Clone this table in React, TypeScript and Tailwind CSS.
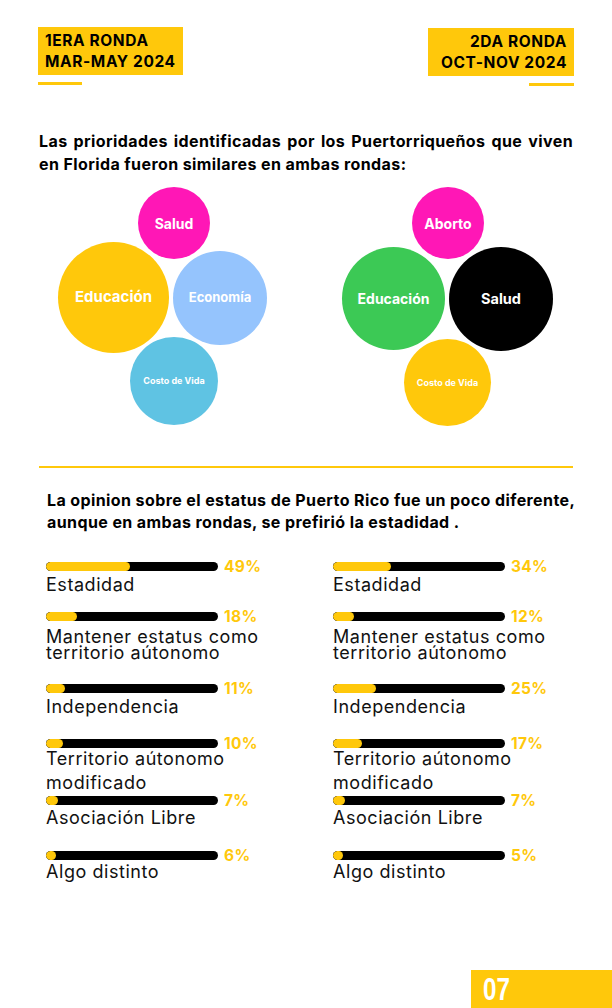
import React from "react";

type Item = {
  pct: number;
  label: string[];
  box: string;
  lab: string;
};

const mk = (pcts: number[]): Item[] => [
  { pct: pcts[0], label: ["Estadidad"], box: "h-[50px]", lab: "mt-[1px] leading-[20px]" },
  { pct: pcts[1], label: ["Mantener estatus como", "territorio aútonomo"], box: "h-[72px]", lab: "mt-[5px] leading-[16px]" },
  { pct: pcts[2], label: ["Independencia"], box: "h-[55px]", lab: "mt-[1px] leading-[20px]" },
  { pct: pcts[3], label: ["Territorio aútonomo", "modificado"], box: "h-[57px]", lab: "mt-[-4px] leading-[24px]" },
  { pct: pcts[4], label: ["Asociación Libre"], box: "h-[55px]", lab: "mt-[0px] leading-[20px]" },
  { pct: pcts[5], label: ["Algo distinto"], box: "h-[55px]", lab: "mt-[-1px] leading-[20px]" },
];

const leftItems = mk([49, 18, 11, 10, 7, 6]);
const rightItems = mk([34, 12, 25, 17, 7, 5]);

function Column({ items }: { items: Item[] }) {
  return (
    <div className="flex flex-col">
      {items.map((it, i) => (
        <div key={i} className={`flex flex-col ${it.box}`}>
          <div className="flex items-start gap-[6px]">
            <div className="mt-[3px] h-[9px] w-[172px] overflow-hidden rounded-full bg-black">
              <div
                className="h-full rounded-full bg-[#FFC80B]"
                style={{ width: Math.max((it.pct / 100) * 172, 10) }}
              />
            </div>
            <span className="text-[15.5px] font-bold leading-[15px] tracking-[0.3px] text-[#FFC80B]">
              {it.pct}%
            </span>
          </div>
          <div className={`text-[18px] tracking-[0.55px] text-[#111] ${it.lab}`}>
            {it.label.map((l, j) => (
              <div key={j}>{l}</div>
            ))}
          </div>
        </div>
      ))}
    </div>
  );
}

function Circle({
  cls,
  text,
  textCls,
}: {
  cls: string;
  text: string;
  textCls: string;
}) {
  return (
    <div className={`absolute flex items-center justify-center rounded-full ${cls}`}>
      <span className={`font-bold text-white ${textCls}`}>{text}</span>
    </div>
  );
}

export default function App() {
  return (
    <div
      className="flex h-[1008px] w-[612px] flex-col overflow-hidden bg-white text-black"
      style={{ fontFamily: "Inter, 'Open Sans', sans-serif" }}
    >
      {/* Header */}
      <div className="flex justify-between px-[38px] pt-[27px]">
        <div className="flex flex-col">
          <div className="flex h-[48px] w-[145px] flex-col justify-center bg-[#FFC80B] px-[7px] text-[15.5px] font-bold leading-[21px] tracking-[0.6px]">
            <div>1ERA RONDA</div>
            <div>MAR-MAY 2024</div>
          </div>
          <div className="mt-[7px] h-[3px] w-[44px] bg-[#FFC80B]" />
        </div>
        <div className="mt-[1px] flex flex-col items-end">
          <div className="flex h-[48px] w-[146px] flex-col items-end justify-center bg-[#FFC80B] px-[7px] text-right text-[15.5px] font-bold leading-[21px] tracking-[0.6px]">
            <div>2DA RONDA</div>
            <div>OCT-NOV 2024</div>
          </div>
          <div className="mt-[7px] h-[3px] w-[45px] bg-[#FFC80B]" />
        </div>
      </div>

      {/* Paragraph 1 */}
      <div className="mt-[44px] px-[39px] text-[16px] font-bold leading-[23px] tracking-[0.4px]">
        <div className="whitespace-nowrap text-justify [text-align-last:justify]">
          Las prioridades identificadas por los Puertorriqueños que viven
        </div>
        <div>en Florida fueron similares en ambas rondas:</div>
      </div>

      {/* Bubbles */}
      <div className="relative mt-[4px] h-[250px] w-full">
        <Circle cls="left-[138px] top-[7px] h-[72px] w-[72px] bg-[#FF17B6]" text="Salud" textCls="text-[14px]" />
        <Circle cls="left-[58px] top-[62px] h-[111px] w-[111px] bg-[#FFC80B]" text="Educación" textCls="text-[15px]" />
        <Circle cls="left-[173px] top-[71px] h-[94px] w-[94px] bg-[#95C4FD]" text="Economía" textCls="text-[13px]" />
        <Circle cls="left-[130px] top-[157px] h-[88px] w-[88px] bg-[#5FC3E3]" text="Costo de Vida" textCls="text-[9px]" />

        <Circle cls="left-[412px] top-[7px] h-[72px] w-[72px] bg-[#FF17B6]" text="Aborto" textCls="text-[14px]" />
        <Circle cls="left-[342px] top-[67px] h-[103px] w-[103px] bg-[#3CC955]" text="Educación" textCls="text-[14px]" />
        <Circle cls="left-[449px] top-[67px] h-[104px] w-[104px] bg-black" text="Salud" textCls="text-[14.5px]" />
        <Circle cls="left-[404px] top-[159px] h-[87px] w-[87px] bg-[#FFC80B]" text="Costo de Vida" textCls="text-[9px]" />
      </div>

      {/* Divider */}
      <div className="mx-[39px] mt-[36px] h-[2px] bg-[#FFC80B]" />

      {/* Paragraph 2 */}
      <div className="mt-[21px] px-[47px] text-[16px] font-bold leading-[22px] tracking-[0.4px]">
        <div className="whitespace-nowrap">La opinion sobre el estatus de Puerto Rico fue un poco diferente,</div>
        <div className="whitespace-nowrap">aunque en ambas rondas, se prefirió la estadidad .</div>
      </div>

      {/* Bars */}
      <div className="mt-[26px] flex pl-[46px]">
        <div className="w-[287px]">
          <Column items={leftItems} />
        </div>
        <Column items={rightItems} />
      </div>

      {/* Footer */}
      <div className="mt-auto flex justify-end">
        <div className="flex h-[38px] w-[141px] items-center bg-[#FFC80B] pl-[12px]">
          <span
            className="inline-block origin-left scale-x-[0.78] text-[31px] font-bold leading-none text-white"
            style={{ fontFamily: "'Liberation Sans', sans-serif" }}
          >
            07
          </span>
        </div>
      </div>
    </div>
  );
}
